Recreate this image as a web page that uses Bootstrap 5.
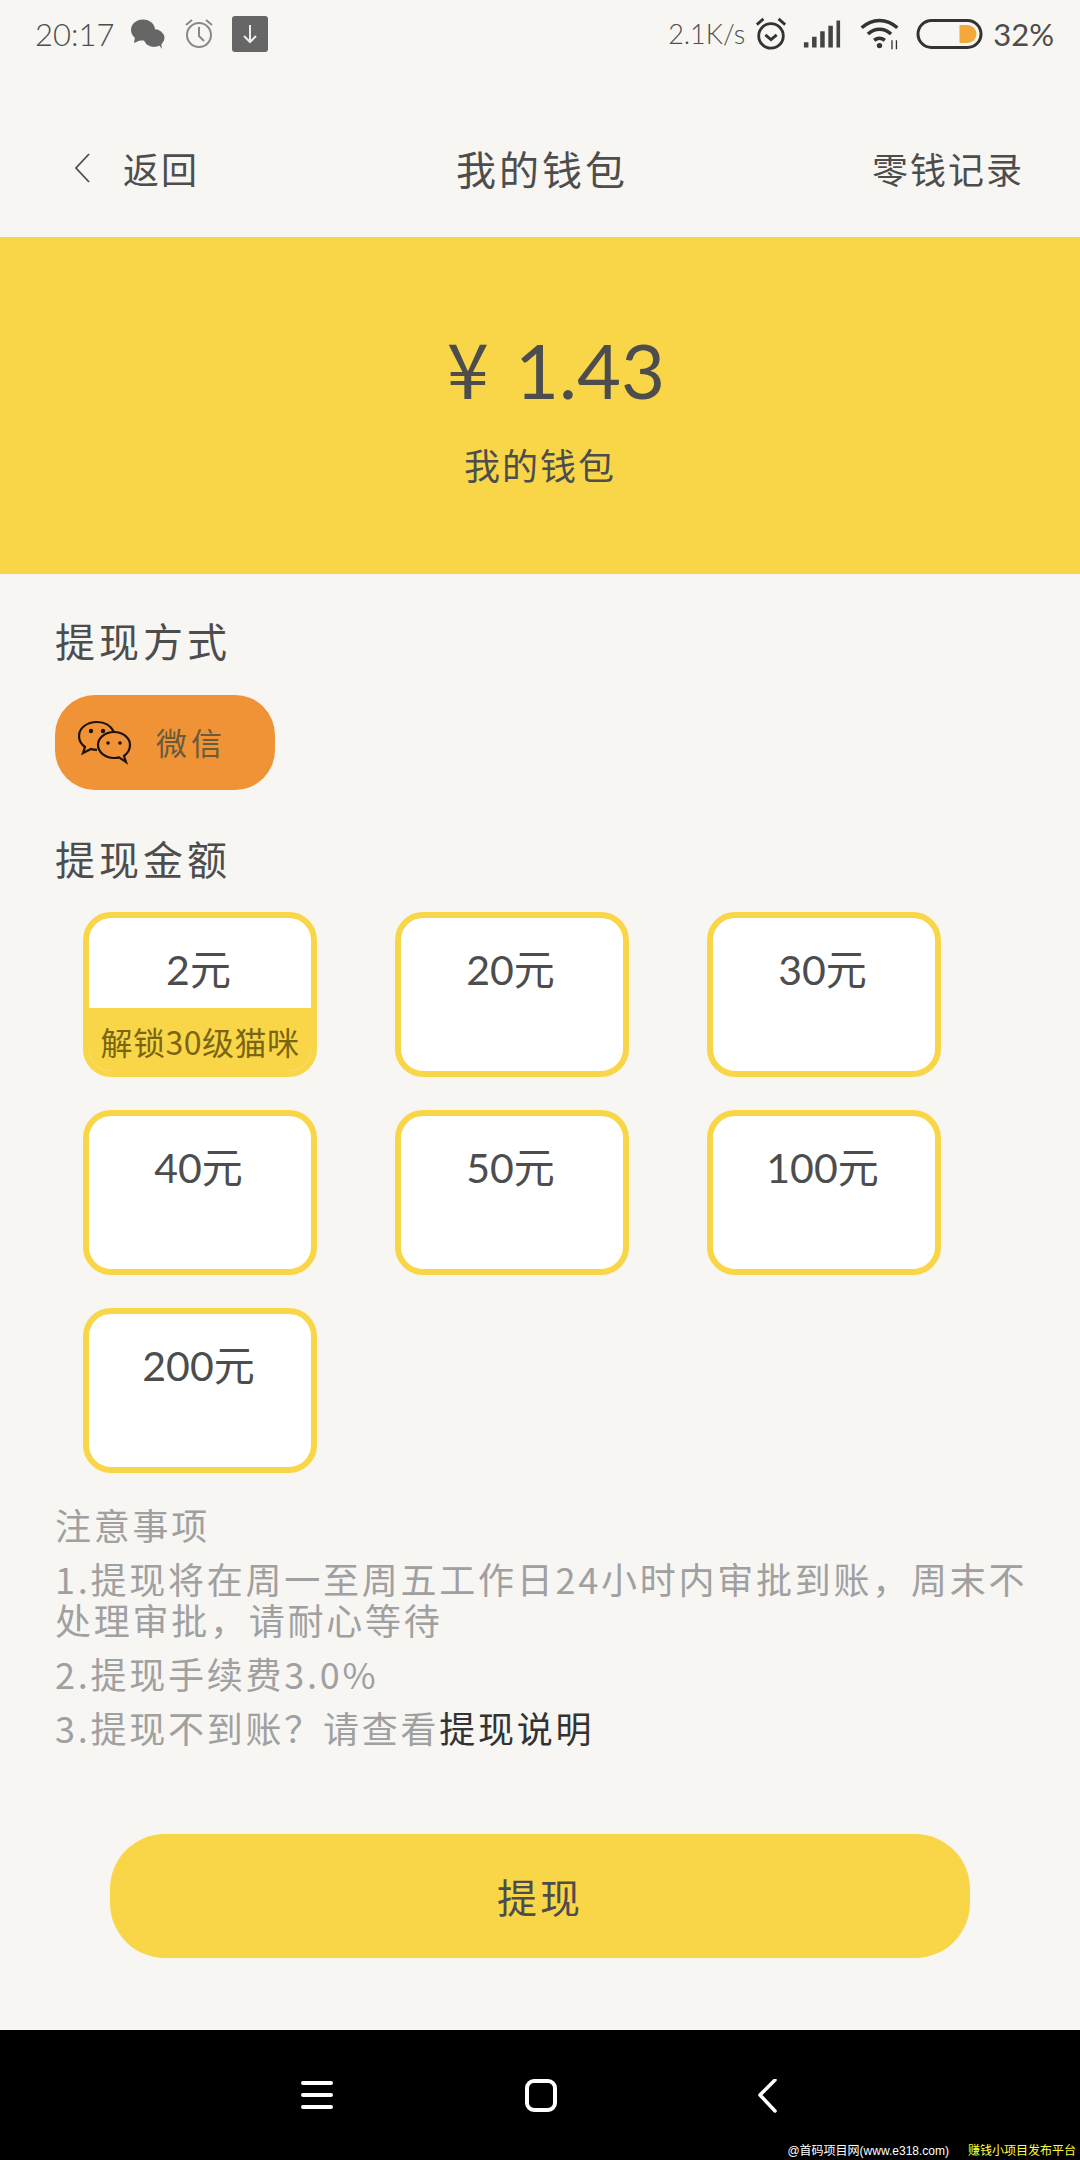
<!DOCTYPE html>
<html lang="zh-CN">
<head>
  <meta charset="UTF-8" />
  <title>我的钱包</title>
  <link href="https://cdn.jsdelivr.net/npm/bootstrap@5.3.2/dist/css/bootstrap.min.css" rel="stylesheet">
  <style>
    html, body { margin: 0; }
    body {
      width: 1080px;
      height: 2160px;
      overflow: hidden;
      background: #f7f6f3;
      color: #4d4d4d;
      font-family: "Noto Sans CJK SC", "Lato", sans-serif;
      font-weight: 400;
    }
    .status-bar { height: 68px; padding: 0 26px 0 35px; font-family: "Lato", sans-serif; font-size: 31px; font-weight: 300; }
    .status-left svg, .status-right svg { display: block; }
    .net-speed { font-size: 27px; }
    .batt-text { font-size: 31px; font-weight: 400; margin-left: 10px; }
    .ic-clock { margin-left: 9px; }
    .ic-signal { margin-left: 15px; }
    .ic-wifi { margin-left: 18px; }
    .ic-batt { margin-left: 16px; }
    .top-nav { height: 169px; padding: 30px 56px 0 74px; font-size: 36px; letter-spacing: 2px; }
    .nav-left { width: 246px; gap: 33px; }
    .nav-right { width: 260px; }
    .top-nav h1 { font-size: 40px; font-weight: 400; letter-spacing: 3px; margin: 0; color: #4d4d4d; }
    .balance-band { height: 337px; background: #f9d648; padding: 86px 0 0 32px; }
    .balance-num { font-family: "Lato", sans-serif; font-size: 76px; line-height: 86px; letter-spacing: 0; font-weight: 400; }
    .balance-num b { font-family: "Noto Sans CJK SC", sans-serif; font-weight: 400; margin-right: 26px; }
    .balance-cap { font-size: 36px; line-height: 50px; margin: 26px 0 0 -32px; letter-spacing: 2px; }
    .sec-title { font-size: 40px; line-height: 56px; letter-spacing: 4px; font-weight: 400; margin: 0; }
    .sec-first { margin-top: -2px; }
    .sec-second { margin-top: 40px; }
    .body-wrap { padding: 40px 55px 0; }
    .pay-pill { width: 220px; height: 95px; margin-top: 27px; background: #ef9336; border-radius: 40px; padding-left: 23px; gap: 24px; font-size: 31px; letter-spacing: 4px; color: #6b5a3c; }
    .amount-grid { display: grid; grid-template-columns: repeat(3, 234px); column-gap: 78px; row-gap: 33px; padding-left: 28px; margin-top: 26px; }
    .amount-tile { height: 165px; border: 6px solid #f9d648; border-radius: 28px; background: #fff; overflow: hidden; display: flex; flex-direction: column; }
    .amount-val { flex: 1; font-size: 41px; line-height: 50px; padding: 27px 3px 0 0; text-align: center; font-family: "Lato", "Noto Sans CJK SC", sans-serif; font-weight: 400; }
    .amount-tag { height: 69px; margin: 0 -6px -6px; background: #f9d648; color: #7b6510; font-size: 32px; line-height: 66px; text-align: center; white-space: nowrap; letter-spacing: .5px; }
    .notes { margin: 31px -10px 0 0; color: #a0a0a0; font-size: 36px; line-height: 41px; letter-spacing: 2.75px; }
    .notes p { margin: 0 0 13px; }
    .notes strong { color: #333; font-weight: 400; }
    .cash-btn { display: block; width: 860px; height: 124px; margin: 86px auto 0; background: #f9d648; color: #4d4d4d; border: 0; border-radius: 55px; font-size: 40px; letter-spacing: 3px; }
    .sys-bar { position: absolute; left: 0; right: 0; top: 2030px; height: 130px; background: #000; }
    .sys-icons { position: absolute; top: 49px; left: 0; width: 100%; height: 40px; }
    .watermark { position: absolute; right: 4px; bottom: 1px; font-family: "Liberation Sans", "Noto Sans CJK SC", sans-serif; font-size: 12px; line-height: 16px; color: #fff; white-space: nowrap; }
    .watermark span { color: #ffff33; margin-left: 19px; }
  </style>
</head>
<body class="position-relative">
  <div class="status-bar d-flex justify-content-between align-items-center">
    <div class="status-left d-flex align-items-center gap-3">
      <span>20:17</span>
      <svg width="36" height="32" viewBox="0 0 36 32"><ellipse cx="13" cy="12" rx="12" ry="10.500" fill="#666"/><path d="M5 19l-1 6 7-3z" fill="#666"/><ellipse cx="24" cy="20" rx="10.500" ry="9" fill="#666"/><path d="M29 27l3 4-1-6z" fill="#666"/></svg>
      <svg width="34" height="34" viewBox="0 0 34 34" fill="none" stroke="#888" stroke-width="2"><circle cx="17" cy="18" r="12"/><path d="M17 10v9l5 5M4 8l6-5M30 8l-6-5"/></svg>
      <svg width="36" height="36" viewBox="0 0 36 36"><rect width="36" height="36" rx="3" fill="#666"/><path d="M18 9v17M12 20l6 6 6-6" fill="none" stroke="#eee" stroke-width="2"/></svg>
    </div>
    <div class="status-right d-flex align-items-center">
      <span class="net-speed">2.1K/s</span>
      <svg class="ic-clock" width="34" height="36" viewBox="0 0 36 38" fill="none" stroke="#333" stroke-width="3"><circle cx="18" cy="21" r="13"/><path d="M12 20l6 5 6-5M3 9l7-6M33 9l-7-6"/></svg>
      <svg class="ic-signal" width="38" height="32" viewBox="0 0 42 32" fill="#444"><path d="M1 25h5v6H1zM10 19h5v12h-5zM19 13h5v18h-5zM28 7h5v24h-5zM37 1h4v30h-4z"/></svg>
      <svg class="ic-wifi" width="41" height="36" viewBox="0 0 46 36" fill="none" stroke="#333" stroke-width="4"><path d="M3 11c12-11 28-11 40 0M10 18c8-7 18-7 26 0M17 25c4-3 8-3 12 0"/><circle cx="23" cy="31" r="3" fill="#333" stroke="none"/><path d="M37 25v10M42 25v10" stroke-width="1.500"/></svg>
      <svg class="ic-batt" width="67" height="30" viewBox="1 1 66 30"><rect x="2.500" y="2.500" width="63" height="27" rx="13.500" fill="none" stroke="#333" stroke-width="3"/><path d="M44 7h8a9 9 0 0 1 0 18h-8z" fill="#f3a93a"/></svg>
      <span class="batt-text">32%</span>
    </div>
  </div>

  <div class="top-nav d-flex justify-content-between align-items-center">
    <div class="nav-left d-flex align-items-center">
      <svg width="16" height="30" viewBox="0 0 16 30" fill="none" stroke="#4d4d4d" stroke-width="1.800"><path d="M15 1L2 15l13 14"/></svg>
      <span>返回</span>
    </div>
    <h1>我的钱包</h1>
    <div class="nav-right text-end">零钱记录</div>
  </div>

  <div class="balance-band text-center">
    <div class="balance-num"><b>¥</b>1.43</div>
    <div class="balance-cap">我的钱包</div>
  </div>

  <div class="body-wrap">
    <h2 class="sec-title sec-first">提现方式</h2>
    <div class="pay-pill d-flex align-items-center">
      <svg width="54" height="46" viewBox="0 0 54 46" fill="none" stroke="#1d1206" stroke-width="2.200">
        <path d="M19 2C9 2 1 8 1 16c0 5 2 8 6 11l-2 6 8-4c2 .6 4 .8 6 .8"/><path d="M19 2c8 0 14 4 17 10"/>
        <path d="M36 12c-9 0-16 6-16 13s7 13 16 13c2 0 3 0 5-.6l7 4.600-2-6c4-3 6-7 6-11 0-7-7-13-16-13z"/>
        <circle cx="13" cy="11" r="2.200" fill="#1d1206" stroke="none"/><circle cx="25" cy="11" r="2.200" fill="#1d1206" stroke="none"/>
        <circle cx="30" cy="23" r="1.800" fill="#1d1206" stroke="none"/><circle cx="42" cy="23" r="1.800" fill="#1d1206" stroke="none"/>
      </svg>
      <span>微信</span>
    </div>

    <h2 class="sec-title sec-second">提现金额</h2>
    <div class="amount-grid">
      <div class="amount-tile"><div class="amount-val">2元</div><div class="amount-tag">解锁30级猫咪</div></div>
      <div class="amount-tile"><div class="amount-val">20元</div></div>
      <div class="amount-tile"><div class="amount-val">30元</div></div>
      <div class="amount-tile"><div class="amount-val">40元</div></div>
      <div class="amount-tile"><div class="amount-val">50元</div></div>
      <div class="amount-tile"><div class="amount-val">100元</div></div>
      <div class="amount-tile"><div class="amount-val">200元</div></div>
    </div>

    <div class="notes">
      <p>注意事项</p>
      <p>1.提现将在周一至周五工作日24小时内审批到账，周末不处理审批，请耐心等待</p>
      <p>2.提现手续费3.0%</p>
      <p>3.提现不到账？请查看<strong>提现说明</strong></p>
    </div>
  </div>

  <button type="button" class="btn cash-btn">提现</button>

  <div class="sys-bar">
    <svg class="sys-icons" viewBox="0 0 1080 40" fill="none" stroke="#fff" stroke-width="4">
      <path d="M303 4h28M303 16h28M303 28h28" stroke-linecap="round"/>
      <rect x="527" y="2" width="28" height="29" rx="7"/>
      <path d="M775 1l-15 15 15 16" stroke-linecap="round" stroke-linejoin="round" stroke-width="3.500"/>
    </svg>
    <div class="watermark">@首码项目网(www.e318.com)<span>赚钱小项目发布平台</span></div>
  </div>
</body>
</html>
